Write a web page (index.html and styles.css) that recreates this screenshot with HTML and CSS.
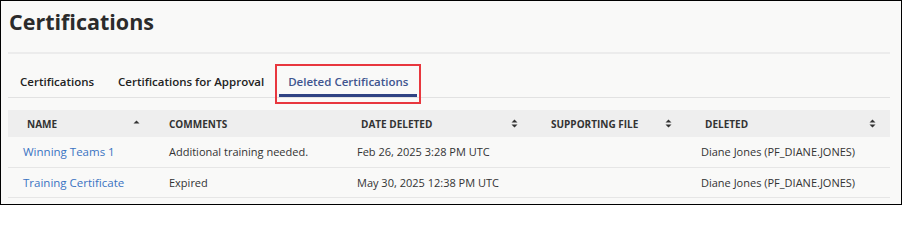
FILE: index.html
```html
<!DOCTYPE html>
<html lang="en">
<head>
<meta charset="utf-8">
<title>Certifications</title>
<link rel="stylesheet" href="styles.css">
</head>
<body>
<div class="frame">
  <h1 class="title">Certifications</h1>
  <div class="rule"></div>
  <nav class="tabs">
    <a class="tab">Certifications</a>
    <a class="tab">Certifications for Approval</a>
    <a class="tab active">Deleted Certifications</a>
  </nav>
  <table class="grid">
    <colgroup>
      <col class="c-name"><col class="c-comments"><col class="c-date"><col class="c-file"><col class="c-deleted">
    </colgroup>
    <thead>
      <tr>
        <th class="sortable"><span>NAME</span><svg class="sort" width="7" height="9" viewBox="0 0 7 9"><path d="M0.5 4.5 L3.5 1.5 L6.5 4.5 Z"/></svg></th>
        <th><span>COMMENTS</span></th>
        <th class="sortable"><span>DATE DELETED</span><svg class="sort" width="7" height="9" viewBox="0 0 7 9"><path d="M0.5 3.6 L3.5 0.6 L6.5 3.6 Z M0.5 5.4 L3.5 8.4 L6.5 5.4 Z"/></svg></th>
        <th class="sortable"><span>SUPPORTING FILE</span><svg class="sort" width="7" height="9" viewBox="0 0 7 9"><path d="M0.5 3.6 L3.5 0.6 L6.5 3.6 Z M0.5 5.4 L3.5 8.4 L6.5 5.4 Z"/></svg></th>
        <th class="sortable"><span>DELETED</span><svg class="sort" width="7" height="9" viewBox="0 0 7 9"><path d="M0.5 3.6 L3.5 0.6 L6.5 3.6 Z M0.5 5.4 L3.5 8.4 L6.5 5.4 Z"/></svg></th>
      </tr>
    </thead>
    <tbody>
      <tr>
        <td><a class="link">Winning Teams 1</a></td>
        <td>Additional training needed.</td>
        <td>Feb 26, 2025 3:28 PM UTC</td>
        <td></td>
        <td>Diane Jones (PF_DIANE.JONES)</td>
      </tr>
      <tr>
        <td><a class="link">Training Certificate</a></td>
        <td>Expired</td>
        <td>May 30, 2025 12:38 PM UTC</td>
        <td></td>
        <td>Diane Jones (PF_DIANE.JONES)</td>
      </tr>
    </tbody>
  </table>
</div>
</body>
</html>
```
FILE: styles.css
```css
* { box-sizing: border-box; }
html, body { margin: 0; padding: 0; }
body {
  font-family: "Open Sans", "Noto Sans", sans-serif;
  color: #333;
  background: #fff;
}
.frame {
  width: 902px;
  height: 205px;
  border: 1px solid #000;
  background: #f9f9f8;
  padding: 0 11px 0 7px;
  overflow: hidden;
}
.title {
  margin: 6px 0 0 0;
  font-size: 21.5px;
  line-height: 30px;
  font-weight: 700;
  color: #2b2b2b;
  padding-left: 1px;
}
.rule {
  margin-top: 15px;
  height: 2px;
  background: #ececec;
}
.tabs {
  display: flex;
  border-bottom: 1px solid #e2e2e2;
}
.tab {
  position: relative;
  margin: 0 3px;
  padding: 19px 9px 3px;
  font-size: 11.5px;
  line-height: 18px;
  font-weight: 600;
  color: #222;
  border-bottom: 3px solid transparent;
}
.tab.active {
  color: #40558f;
  border-bottom-color: #2f4283;
}
.tab.active::after {
  content: "";
  position: absolute;
  left: -4px;
  right: -4px;
  top: 10px;
  bottom: -10px;
  border: 2px solid #e8373e;
}
.grid {
  margin-top: 12px;
  width: 882px;
  border-collapse: collapse;
  table-layout: fixed;
  font-size: 11px;
}
.c-name { width: 146px; }
.c-comments { width: 188px; }
.c-date { width: 190px; }
.c-file { width: 154px; }
.c-deleted { width: 204px; }
thead th {
  background: #eeeeee;
  height: 27px;
  padding: 0 15px;
  text-align: left;
  font-size: 10px;
  font-weight: 700;
  color: #333;
  vertical-align: middle;
}
th.sortable { padding-left: 19px; position: relative; }
th > span { vertical-align: middle; }
th .sort {
  position: absolute;
  right: 14px;
  top: 9px;
  fill: #333;
}
tbody td {
  height: 30px;
  padding: 0 15px;
  border-bottom: 1px solid #e6e6e6;
  vertical-align: middle;
  color: #333;
  white-space: nowrap;
}
.link {
  color: #3a73c2;
  font-size: 11.5px;
}
```
